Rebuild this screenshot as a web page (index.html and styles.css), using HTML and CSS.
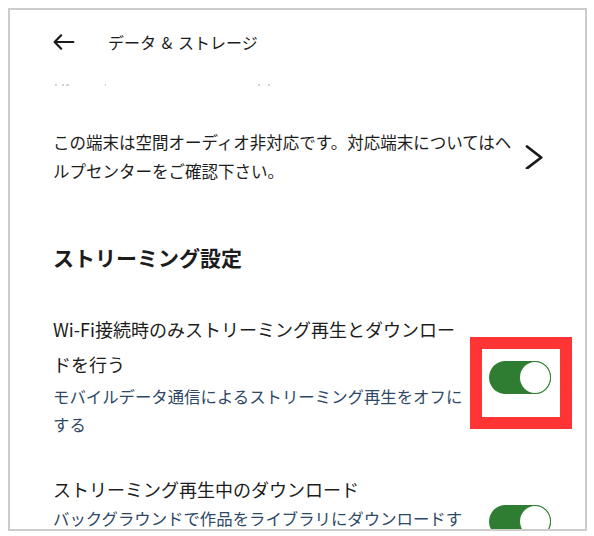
FILE: index.html
```html
<!DOCTYPE html>
<html lang="ja">
<head>
<meta charset="utf-8">
<title>データ &amp; ストレージ</title>
<link rel="stylesheet" href="styles.css">
</head>
<body>
<div class="frame">
  <header class="appbar">
    <svg class="back" width="24" height="24" viewBox="0 0 24 24" aria-hidden="true">
      <path d="M22.3 12H3.6M10.2 5.3L3.6 12l6.6 6.7" fill="none" stroke="#1a1a1a" stroke-width="2.2" stroke-linecap="round" stroke-linejoin="round"/>
    </svg>
    <span class="appbar-title">データ &amp; ストレージ</span>
  </header>

  <div class="clip-row">
    <span class="dot d1"></span><span class="dot d2"></span><span class="dot d3"></span><span class="dot d4"></span><span class="dot d5"></span><span class="dot d6"></span>
  </div>

  <section class="notice">
    <p class="notice-text">この端末は空間オーディオ非対応です。対応端末についてはヘルプセンターをご確認下さい。</p>
    <svg class="chev" width="24" height="24" viewBox="0 0 24 24" aria-hidden="true">
      <path d="M5 1.5L19.2 12.5L5 23.3" fill="none" stroke="#1a1a1a" stroke-width="2.8" stroke-linecap="round" stroke-linejoin="round"/>
    </svg>
  </section>

  <h2 class="section-title">ストリーミング設定</h2>

  <div class="setting first">
    <div class="setting-text">
      <div class="setting-label">Wi-Fi接続時のみストリーミング再生とダウンロードを行う</div>
      <div class="setting-desc">モバイルデータ通信によるストリーミング再生をオフにする</div>
    </div>
    <div class="switch-wrap">
      <span class="switch"><span class="thumb"></span></span>
      <span class="highlight"></span>
    </div>
  </div>

  <div class="setting second">
    <div class="setting-text">
      <div class="setting-label">ストリーミング再生中のダウンロード</div>
      <div class="setting-desc">バックグラウンドで作品をライブラリにダウンロードする</div>
    </div>
    <div class="switch-wrap">
      <span class="switch"><span class="thumb"></span></span>
    </div>
  </div>
</div>
</body>
</html>
```

FILE: styles.css
```css
html, body {
  margin: 0;
  padding: 0;
  background: #ffffff;
}

body {
  padding: 8px;
  font-family: "Noto Sans CJK JP", "Noto Sans", sans-serif;
  color: #1c1c1c;
}

.frame {
  box-sizing: border-box;
  width: 579px;
  height: 523px;
  border: 2px solid #cccccc;
  overflow: hidden;
  background: #ffffff;
}

.appbar {
  height: 64px;
  display: flex;
  align-items: center;
  padding-left: 41px;
}

.back {
  display: block;
  flex: none;
}

.appbar-title {
  margin-left: 33px;
  font-size: 16px;
  line-height: 20px;
  word-spacing: 2px;
  color: #1c1c1c;
}

.clip-row {
  position: relative;
  height: 3px;
  margin-top: 10px;
}

.dot {
  position: absolute;
  top: 0;
  height: 2px;
  background: #cfd2de;
}
.d1 { left: 45px; width: 2px; }
.d2 { left: 52px; width: 2px; }
.d3 { left: 56px; width: 3px; }
.d4 { left: 95px; width: 1px; }
.d5 { left: 248px; width: 2px; }
.d6 { left: 258px; width: 2px; }

.notice {
  display: flex;
  align-items: center;
  margin-top: 41px;
  padding-left: 43px;
}

.notice-text {
  margin: 0;
  width: 470px;
  flex: none;
  font-size: 16.5px;
  line-height: 29px;
  color: #1c1c1c;
}

.chev {
  display: block;
  flex: none;
  margin-left: -1px;
}

.section-title {
  margin: 56px 0 0;
  padding-left: 43px;
  font-size: 21px;
  line-height: 30px;
  font-weight: 700;
  color: #1c1c1c;
}

.setting {
  display: flex;
  align-items: center;
  padding-left: 43px;
}

.setting.first {
  margin-top: 40px;
}

.setting.second {
  margin-top: 34px;
}

.setting-text {
  width: 418px;
  flex: none;
}

.setting-label {
  font-size: 18px;
  line-height: 35px;
  color: #1c1c1c;
}

.setting-desc {
  font-size: 16.4px;
  line-height: 28px;
  color: #2e4866;
}

.second .setting-desc {
  margin-top: -3px;
}

.switch-wrap {
  position: relative;
  margin-left: 18px;
  width: 62px;
  height: 33px;
  flex: none;
}

.first .switch-wrap {
  top: 2px;
}

.second .switch-wrap {
  top: 5px;
}

.switch {
  display: block;
  box-sizing: border-box;
  width: 62px;
  height: 33px;
  border-radius: 17px;
  background: #2e7d32;
  position: relative;
}

.thumb {
  position: absolute;
  right: 0;
  top: 0;
  box-sizing: border-box;
  width: 32px;
  height: 33px;
  border-radius: 50%;
  background: #ffffff;
  border: 1.5px solid #2e7d32;
}

.highlight {
  position: absolute;
  left: -19px;
  top: -24px;
  width: 102px;
  height: 92px;
  box-sizing: border-box;
  border: 12.5px solid #ff3535;
  pointer-events: none;
}
```
